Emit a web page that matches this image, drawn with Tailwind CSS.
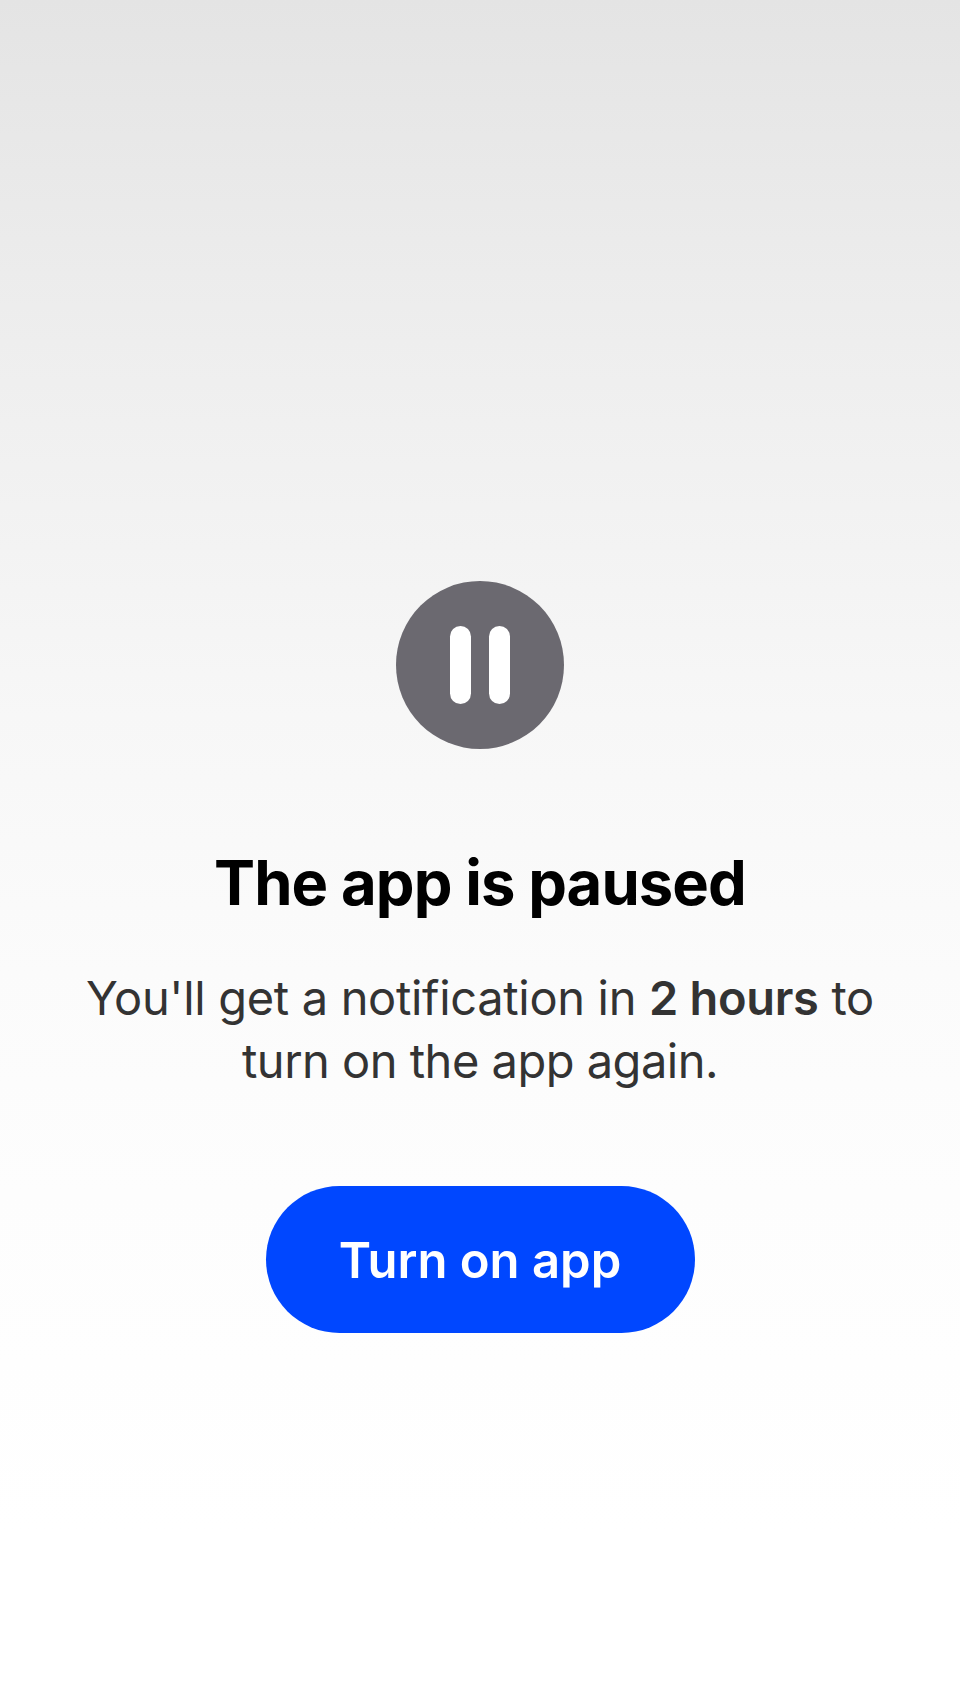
<!DOCTYPE html>
<html lang="en">
<head>
<meta charset="utf-8">
<title>The app is paused</title>
<script src="https://cdn.jsdelivr.net/npm/@tailwindcss/browser@4"></script>
</head>
<body class="bg-white">
<main class="flex h-[1704px] w-[960px] flex-col items-center bg-[linear-gradient(to_bottom,#e4e4e4_0%,#eeeeee_20%,#f7f7f7_42%,#fbfbfb_57%,#fdfdfd_70%,#ffffff_90%)] pt-[581px] font-['Inter',sans-serif]">
<svg class="size-[168px] shrink-0" viewBox="0 0 168 168" aria-hidden="true">
<circle cx="84" cy="84" r="84" fill="#6b6970"/>
<rect x="54" y="45" width="21" height="78" rx="10.5" fill="#fff"/>
<rect x="93" y="45" width="21" height="78" rx="10.5" fill="#fff"/>
</svg>
<h1 class="mt-[98px] whitespace-nowrap text-[61.5px] leading-[72px] font-bold tracking-[-0.9px] text-black">The app is paused</h1>
<p class="mt-[47px] text-center text-[47px] leading-[63px] tracking-[-0.32px] whitespace-nowrap text-[#333333]">You'll get a notification in <strong class="font-semibold">2 hours</strong> to<br><span class="tracking-[-0.5px]">turn on the app again.</span></p>
<button class="mt-[94px] h-[147px] w-[429px] rounded-full bg-[#0047ff] pt-0.5 text-[49px] font-semibold whitespace-nowrap text-white">Turn on app</button>
</main>
</body>
</html>
